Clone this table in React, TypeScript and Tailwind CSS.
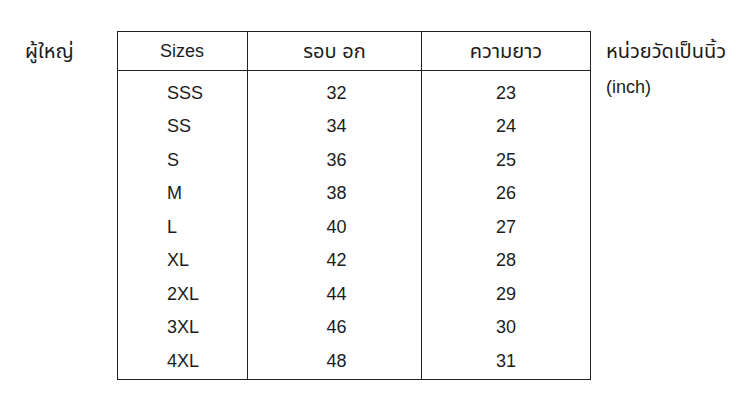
const rows = [
  ['SSS', '32', '23'],
  ['SS', '34', '24'],
  ['S', '36', '25'],
  ['M', '38', '26'],
  ['L', '40', '27'],
  ['XL', '42', '28'],
  ['2XL', '44', '29'],
  ['3XL', '46', '30'],
  ['4XL', '48', '31'],
];

export default function App() {
  return (
    <div
      className="w-[745px] h-[404px] bg-white text-[#1c1c1c] text-[18px] leading-none"
      style={{ fontFamily: '"Liberation Sans", "Noto Sans Thai", "Noto Sans", sans-serif' }}
    >
      <div className="flex items-start pt-[31px] pl-[25px]">
        {/* Left label */}
        <div className="w-[92px] pt-[10px] text-[20px]">ผู้ใหญ่</div>

        {/* Size table */}
        <div className="w-[474px] border border-[#222]">
          <div className="grid grid-cols-[130px_174px_1fr] h-[39px] border-b border-[#222]">
            <div className="flex items-center pl-[42px] border-r border-[#222]">Sizes</div>
            <div className="flex items-center justify-center border-r border-[#222] text-[20px]">รอบ อก</div>
            <div className="flex items-center justify-center text-[20px]">ความยาว</div>
          </div>
          <div className="grid grid-cols-[130px_174px_1fr]">
            <div className="border-r border-[#222] pt-[5px] pb-[1px]">
              {rows.map((r) => (
                <div key={r[0]} className="h-[33.5px] flex items-center pl-[49px]">
                  {r[0]}
                </div>
              ))}
            </div>
            <div className="border-r border-[#222] pt-[5px] pb-[1px]">
              {rows.map((r) => (
                <div key={r[0]} className="h-[33.5px] flex items-center justify-center pl-[4px]">
                  {r[1]}
                </div>
              ))}
            </div>
            <div className="pt-[5px] pb-[1px]">
              {rows.map((r) => (
                <div key={r[0]} className="h-[33.5px] flex items-center justify-center">
                  {r[2]}
                </div>
              ))}
            </div>
          </div>
        </div>

        {/* Unit note */}
        <div className="pl-[15px] pt-[10px]">
          <div className="text-[20px]">หน่วยวัดเป็นนิ้ว</div>
          <div className="mt-[17px]">(inch)</div>
        </div>
      </div>
    </div>
  );
}
